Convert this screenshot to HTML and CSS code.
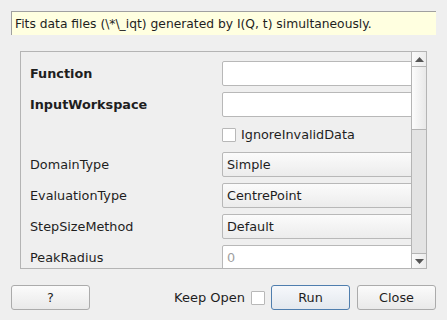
FILE: index.html
```html
<!DOCTYPE html>
<html>
<head>
<meta charset="utf-8">
<link rel="stylesheet" href="styles.css">
</head>
<body>
<div class="dialog">
  <div class="desc">Fits data files (\*\_iqt) generated by I(Q, t) simultaneously.</div>
  <div class="frame">
    <div class="content">
      <div class="row">
        <div class="label bold">Function</div>
        <div class="field input"></div>
      </div>
      <div class="row">
        <div class="label bold">InputWorkspace</div>
        <div class="field input"></div>
      </div>
      <div class="row short">
        <div class="label"></div>
        <div class="field check-field"><span class="check"></span><span>IgnoreInvalidData</span></div>
      </div>
      <div class="row">
        <div class="label">DomainType</div>
        <div class="field combo">Simple</div>
      </div>
      <div class="row">
        <div class="label">EvaluationType</div>
        <div class="field combo">CentrePoint</div>
      </div>
      <div class="row">
        <div class="label">StepSizeMethod</div>
        <div class="field combo">Default</div>
      </div>
      <div class="row">
        <div class="label">PeakRadius</div>
        <div class="field input placeholder">0</div>
      </div>
    </div>
    <div class="scrollbar">
      <div class="sb-btn up"><svg width="9" height="5" viewBox="0 0 9 5"><path d="M0 5 L4.5 0 L9 5 Z" fill="#555"/></svg></div>
      <div class="sb-handle"></div>
      <div class="sb-track"></div>
      <div class="sb-btn down"><svg width="9" height="5" viewBox="0 0 9 5"><path d="M0 0 L4.5 5 L9 0 Z" fill="#555"/></svg></div>
    </div>
  </div>
  <div class="footer">
    <button class="btn">?</button>
    <div class="spacer"></div>
    <span class="keep">Keep Open</span>
    <span class="check keep-check"></span>
    <button class="btn run">Run</button>
    <button class="btn">Close</button>
  </div>
</div>
</body>
</html>
```
FILE: styles.css
```css
html, body {
  margin: 0;
  padding: 0;
  background: #efefef;
}
body {
  font-family: "DejaVu Sans", sans-serif;
  font-size: 12.8px;
  color: #1e1e1e;
  width: 447px;
  height: 320px;
  overflow: hidden;
}
.dialog {
  padding: 11px 11px 0 11px;
}
.desc {
  height: 24px;
  box-sizing: border-box;
  background: #ffffe0;
  border-top: 1px solid #a0a0a0;
  border-left: 1px solid #a0a0a0;
  padding: 4px 0 0 3px;
  line-height: 16px;
  font-size: 12.3px;
  white-space: nowrap;
}
.frame {
  margin: 16px 0 0 9px;
  width: 407px;
  height: 218px;
  box-sizing: border-box;
  border: 1px solid #b4b4b4;
  display: flex;
}
.content {
  flex: 1;
  overflow: hidden;
  padding: 9px 0 0 9px;
  display: flex;
  flex-direction: column;
  gap: 6px;
}
.row {
  display: flex;
  align-items: center;
  height: 25px;
  flex: none;
}
.row.short {
  height: 23px;
}
.label {
  width: 192px;
  flex: none;
  white-space: nowrap;
}
.bold {
  font-weight: bold;
}
.field {
  flex: none;
  width: 200px;
  height: 25px;
  box-sizing: border-box;
  display: flex;
  align-items: center;
  white-space: nowrap;
}
.input {
  background: #fff;
  border: 1px solid #b8b8b8;
  border-radius: 2px;
  padding-left: 4px;
}
.placeholder {
  color: #a0a0a0;
}
.combo {
  background: linear-gradient(#fbfbfb, #ececec);
  border: 1px solid #b8b8b8;
  border-radius: 2px;
  padding-left: 4px;
}
.check-field {
  gap: 5px;
}
.check {
  display: inline-block;
  width: 14px;
  height: 14px;
  box-sizing: border-box;
  background: #fff;
  border: 1px solid #b8b8b8;
  border-radius: 1px;
  flex: none;
}
.scrollbar {
  width: 14px;
  flex: none;
  border-left: 1px solid #b4b4b4;
  display: flex;
  flex-direction: column;
}
.sb-btn {
  height: 14px;
  flex: none;
  display: flex;
  align-items: center;
  justify-content: center;
  background: linear-gradient(90deg, #fafafa, #ececec);
}
.sb-btn.up {
  border-bottom: 1px solid #b4b4b4;
}
.sb-btn.down {
  border-top: 1px solid #b4b4b4;
}
.sb-handle {
  height: 62px;
  flex: none;
  background: linear-gradient(90deg, #fcfcfc, #e8e8e8);
  border-bottom: 1px solid #b4b4b4;
}
.sb-track {
  flex: 1;
  background: #e3e3e3;
}
.footer {
  margin-top: 16px;
  display: flex;
  align-items: center;
  height: 25px;
}
.spacer {
  flex: 1;
}
.btn {
  width: 79px;
  height: 25px;
  box-sizing: border-box;
  font-family: "DejaVu Sans", sans-serif;
  font-size: 12.8px;
  color: #1e1e1e;
  background: linear-gradient(#fbfbfb, #e9e9e9);
  border: 1px solid #ababab;
  border-radius: 3px;
  padding: 0;
}
.keep {
  margin-right: 6px;
  font-size: 13px;
}
.keep-check {
  margin-right: 6px;
}
.run {
  border-color: #4f7eae;
  background: linear-gradient(#f6f8fb, #e3e8ee);
  margin-right: 7px;
}
```
